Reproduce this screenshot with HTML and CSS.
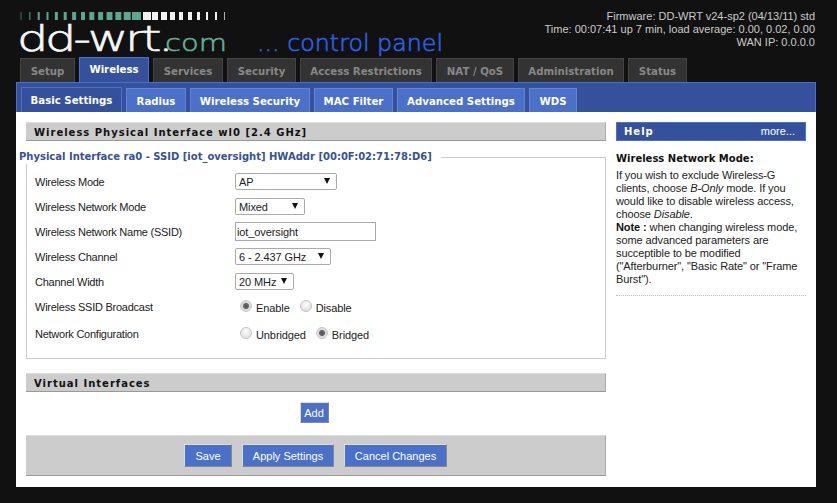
FILE: index.html
```html
<!DOCTYPE html>
<html lang="en">
<head>
    <meta charset="UTF-8">
    <meta name="viewport" content="width=device-width, initial-scale=1.0">
    <title>DD-WRT (build 16214) - Basic Settings</title>
    <link rel="stylesheet" href="styles.css">
</head>
<body>
    <div class="wrapper">
        <div class="header">
            <svg class="logo" width="440" height="50" viewBox="0 0 440 50">
                <g fill="#5aa68f">
                    <rect x="4.5" y="0" width="1" height="8" fill="#3f7465"/>
                    <rect x="13.4" y="0" width="1" height="8"/>
                    <rect x="21.7" y="0" width="2" height="8"/>
                    <rect x="30.5" y="0" width="2" height="8"/>
                    <rect x="38.9" y="0" width="3" height="8"/>
                    <rect x="47.7" y="0" width="3" height="8"/>
                    <rect x="56.1" y="0" width="4" height="8"/>
                    <rect x="65" y="0" width="4" height="8"/>
                    <rect x="73.3" y="0" width="5" height="8"/>
                    <rect x="82.1" y="0" width="5" height="8"/>
                    <rect x="90.5" y="0" width="6" height="8"/>
                    <rect x="99.3" y="0" width="6" height="8"/>
                    <rect x="107.7" y="0" width="7" height="8"/>
                    <rect x="116" y="0" width="9" height="8"/>
                </g>
                <g fill="#f2f2f2">
                    <rect x="127" y="0" width="8" height="8"/>
                    <rect x="136" y="0" width="6" height="8"/>
                    <rect x="145" y="0" width="6" height="8"/>
                    <rect x="154" y="0" width="5" height="8"/>
                    <rect x="163" y="0" width="4" height="8"/>
                    <rect x="172" y="0" width="4" height="8"/>
                    <rect x="181" y="0" width="3" height="8"/>
                    <rect x="190" y="0" width="2" height="8"/>
                    <rect x="199" y="0" width="2" height="8"/>
                    <rect x="208" y="0" width="1" height="8" fill="#aaa"/>
                </g>
                <text class="logo-main" transform="translate(1 39) scale(1.34 0.94)">dd-wrt.</text>
                <text class="logo-com" x="149" y="39" textLength="62" lengthAdjust="spacingAndGlyphs">com</text>
                <text class="logo-panel" x="241" y="39" textLength="186" lengthAdjust="spacingAndGlyphs">... control panel</text>
            </svg>
            <div class="router-info">
                <div>Firmware: DD-WRT v24-sp2 (04/13/11) std</div>
                <div>Time: 00:07:41 up 7 min, load average: 0.00, 0.02, 0.00</div>
                <div>WAN IP: 0.0.0.0</div>
            </div>
        </div>

        <ul class="menu">
            <li class="w55">Setup</li>
            <li class="w70 current">Wireless</li>
            <li class="w70">Services</li>
            <li class="w69">Security</li>
            <li class="w132">Access Restrictions</li>
            <li class="w78">NAT / QoS</li>
            <li class="w106">Administration</li>
            <li class="w59">Status</li>
        </ul>

        <ul class="submenu">
            <li class="w101 current">Basic Settings</li>
            <li class="w60">Radius</li>
            <li class="w120">Wireless Security</li>
            <li class="w79">MAC Filter</li>
            <li class="w128">Advanced Settings</li>
            <li class="w48">WDS</li>
        </ul>

        <div class="content">
            <div class="main">
                <h2>Wireless Physical Interface wl0 [2.4 GHz]</h2>
                <fieldset>
                    <legend>Physical Interface ra0 - SSID [iot_oversight] HWAddr [00:0F:02:71:78:D6]</legend>
                    <div class="setting">
                        <div class="label">Wireless Mode</div>
                        <span class="select w102"><select><option>AP</option></select></span>
                    </div>
                    <div class="setting">
                        <div class="label">Wireless Network Mode</div>
                        <span class="select w70"><select><option>Mixed</option></select></span>
                    </div>
                    <div class="setting">
                        <div class="label">Wireless Network Name (SSID)</div>
                        <input class="text" type="text" value="iot_oversight">
                    </div>
                    <div class="setting">
                        <div class="label">Wireless Channel</div>
                        <span class="select w96"><select><option>6 - 2.437 GHz</option></select></span>
                    </div>
                    <div class="setting">
                        <div class="label">Channel Width</div>
                        <span class="select w59"><select><option>20 MHz</option></select></span>
                    </div>
                    <div class="setting radios">
                        <div class="label">Wireless SSID Broadcast</div>
                        <label><input type="radio" name="ssid" checked>Enable</label>
                        <label><input type="radio" name="ssid">Disable</label>
                    </div>
                    <div class="setting radios last">
                        <div class="label">Network Configuration</div>
                        <label><input type="radio" name="net">Unbridged</label>
                        <label><input type="radio" name="net" checked>Bridged</label>
                    </div>
                </fieldset>

                <h2 class="virtual">Virtual Interfaces</h2>
                <div class="center"><button class="add">Add</button></div>

                <div class="submit">
                    <button class="w48">Save</button>
                    <button class="w92">Apply Settings</button>
                    <button class="w103">Cancel Changes</button>
                </div>
            </div>

            <div class="help">
                <div class="help-head"><h2>Help</h2><span>more...</span></div>
                <dl>
                    <dt>Wireless Network Mode:</dt>
                    <dd>If you wish to exclude Wireless-G clients, choose <em>B-Only</em> mode. If you would like to disable wireless access, choose <em>Disable</em>.<br><b>Note :</b> when changing wireless mode, some advanced parameters are succeptible to be modified ("Afterburner", "Basic Rate" or "Frame Burst").</dd>
                </dl>
            </div>
        </div>
    </div>
</body>
</html>
```

FILE: styles.css
```css
html, body {
    margin: 0;
    padding: 0;
}
body {
    background-color: #111;
    font-family: "Liberation Sans", Arial, sans-serif;
    font-size: 11px;
    color: #222;
    height: 503px;
    overflow: hidden;
}
.wrapper {
    width: 800px;
    margin-left: 16px;
}
.header {
    height: 57px;
    display: flex;
    justify-content: space-between;
}
.logo {
    margin-top: 12px;
    flex: none;
}
.logo-main {
    font-family: "DejaVu Sans", sans-serif;
    font-size: 37px;
    font-weight: 200;
    letter-spacing: -2.5px;
    fill: #f6f6f6;
    stroke: #f6f6f6;
    stroke-width: 0.7px;
}
.logo-com {
    font-family: "DejaVu Sans", sans-serif;
    font-size: 23px;
    font-weight: 200;
    fill: #62b49b;
    stroke: #62b49b;
    stroke-width: 0.5px;
}
.logo-panel {
    font-family: "DejaVu Sans", sans-serif;
    font-size: 23px;
    font-weight: 200;
    fill: #2a62e6;
    stroke: #2a62e6;
    stroke-width: 0.6px;
}
.router-info {
    padding-top: 10px;
    margin-right: 1px;
    text-align: right;
    color: #ccc;
    line-height: 13px;
    white-space: nowrap;
}

/* tabs */
ul {
    list-style: none;
    margin: 0;
    padding: 0;
}
.menu {
    display: flex;
    gap: 4px;
    height: 25px;
    align-items: flex-end;
    margin-left: 4px;
    font-family: "DejaVu Sans", sans-serif;
    font-size: 10.2px;
    font-weight: bold;
}
.menu li {
    box-sizing: border-box;
    height: 24px;
    line-height: 25px;
    border: 1px solid #444;
    border-bottom: none;
    background: #333;
    color: #888;
    text-align: center;
    white-space: nowrap;
}
.menu li.current {
    height: 25px;
    line-height: 24px;
    background: #36519c;
    border-color: #4a70c8;
    color: #fff;
}
.submenu {
    display: flex;
    gap: 4px;
    height: 30px;
    align-items: flex-end;
    padding-left: 4px;
    background: #36519c;
    border: 1px solid #4a70c8;
    border-bottom: none;
    box-sizing: border-box;
    font-family: "DejaVu Sans", sans-serif;
    font-size: 10.2px;
    font-weight: bold;
}
.submenu li {
    box-sizing: border-box;
    height: 24px;
    line-height: 25px;
    background: #4a70c8;
    border: 1px solid #6085d5;
    border-bottom: none;
    color: #fff;
    text-align: center;
    white-space: nowrap;
}
.submenu li.current {
    height: 25px;
    background: #36519c;
    border-color: #4a70c8;
}
.w48 { width: 48px; }
.w55 { width: 55px; }
.w59 { width: 59px; }
.w60 { width: 60px; }
.w69 { width: 69px; }
.w70 { width: 70px; }
.w78 { width: 78px; }
.w79 { width: 79px; }
.w92 { width: 92px; }
.w96 { width: 96px; }
.w101 { width: 101px; }
.w102 { width: 102px; }
.w103 { width: 103px; }
.w106 { width: 106px; }
.w120 { width: 120px; }
.w128 { width: 128px; }
.w132 { width: 132px; }

/* content */
.content {
    display: flex;
    background: #fff;
    height: 375px;
    padding: 10px 10px 0 10px;
    box-sizing: border-box;
}
.main {
    width: 580px;
    flex: none;
}
h2 {
    margin: 0;
    height: 19px;
    box-sizing: border-box;
    padding-left: 8px;
    font-family: "DejaVu Sans", sans-serif;
    font-size: 10px;
    line-height: 19px;
    letter-spacing: 1px;
    font-weight: bold;
    color: #111;
    background: #ccc;
    border-top: 1px solid #ddd;
    border-right: 1px solid #aaa;
    border-bottom: 1px solid #999;
}
fieldset {
    margin: 9px 0 0 0;
    padding: 0 0 0 8px;
    height: 209px;
    box-sizing: border-box;
    border: 1px solid #ccc;
}
legend {
    margin-left: -16px;
    padding: 0 9px 0 0;
    background: #fff;
    color: #36519c;
    font-family: "DejaVu Sans", sans-serif;
    font-size: 10px;
    font-weight: bold;
    line-height: 14px;
    white-space: nowrap;
}
.setting {
    display: flex;
    align-items: center;
    height: 25px;
    letter-spacing: -0.1px;
}
.setting:first-of-type {
    margin-top: 5px;
}
.label {
    width: 200px;
    flex: none;
    letter-spacing: -0.25px;
}
.select {
    display: block;
    position: relative;
    height: 17px;
}
.select::after {
    content: "";
    position: absolute;
    right: 7px;
    top: 5px;
    border-left: 3px solid transparent;
    border-right: 3px solid transparent;
    border-top: 6px solid #111;
}
select {
    appearance: none;
    display: block;
    width: 100%;
    height: 17px;
    margin: 0;
    padding: 0 0 0 3px;
    background: #fff;
    border: 1px solid #aaa;
    border-radius: 2px;
    font: inherit;
    letter-spacing: inherit;
    color: #222;
}
.text {
    width: 141px;
    height: 19px;
    box-sizing: border-box;
    margin: 0;
    padding: 0 1px;
    border: 1px solid #aaa;
    font: inherit;
    letter-spacing: inherit;
    color: #222;
}
.radios label {
    display: inline-flex;
    align-items: center;
    margin-right: 5px;
    padding-top: 3px;
}
.radios.last {
    height: 29px;
}
input[type=radio] {
    appearance: none;
    width: 12px;
    height: 12px;
    margin: -5px 4px 0 5px;
    border: 1px solid #c4c4c4;
    border-radius: 50%;
    background: radial-gradient(circle at 50% 35%, #fdfdfd, #d8d8d8);
}
input[type=radio]:checked {
    background: radial-gradient(circle, #555 0, #666 2.5px, #d8d8d8 3.5px, #eee 100%);
}
.virtual {
    margin-top: 14px;
}
.center {
    text-align: center;
    height: 43px;
    padding: 10px 4px 0 0;
    box-sizing: border-box;
}
button {
    box-sizing: border-box;
    height: 23px;
    margin: 0;
    padding: 0;
    background: #4a70c8;
    color: #fff;
    border: 1px solid;
    border-color: #ddd #888 #888 #ddd;
    font: inherit;
    cursor: pointer;
}
.add {
    width: 29px;
    height: 21px;
}
.submit {
    height: 41px;
    box-sizing: border-box;
    background: #ccc;
    border-top: 1px solid #ddd;
    border-right: 1px solid #aaa;
    border-bottom: 1px solid #999;
    display: flex;
    justify-content: center;
    align-items: center;
    gap: 10px;
}

/* help column */
.help {
    width: 190px;
    margin-left: 10px;
    flex: none;
}
.help-head {
    display: flex;
    justify-content: space-between;
    height: 19px;
    box-sizing: border-box;
    background: #36519c;
    border: 1px solid #4a70c8;
    color: #fff;
    padding: 0 10px 0 7px;
    line-height: 17px;
}
.help-head h2 {
    background: none;
    border: none;
    height: auto;
    padding: 0;
    color: #fff;
    line-height: 17px;
}
dl {
    margin: 11px 0 0 0;
    padding-bottom: 9px;
    border-bottom: 1px dotted #bbb;
}
dt {
    font-weight: bold;
    font-family: "DejaVu Sans", sans-serif;
    font-size: 10px;
    line-height: 14px;
    margin-bottom: 3px;
    color: #111;
}
dd {
    margin: 0;
    line-height: 13px;
    color: #222;
    letter-spacing: -0.1px;
}
b {
    color: #111;
}
```
